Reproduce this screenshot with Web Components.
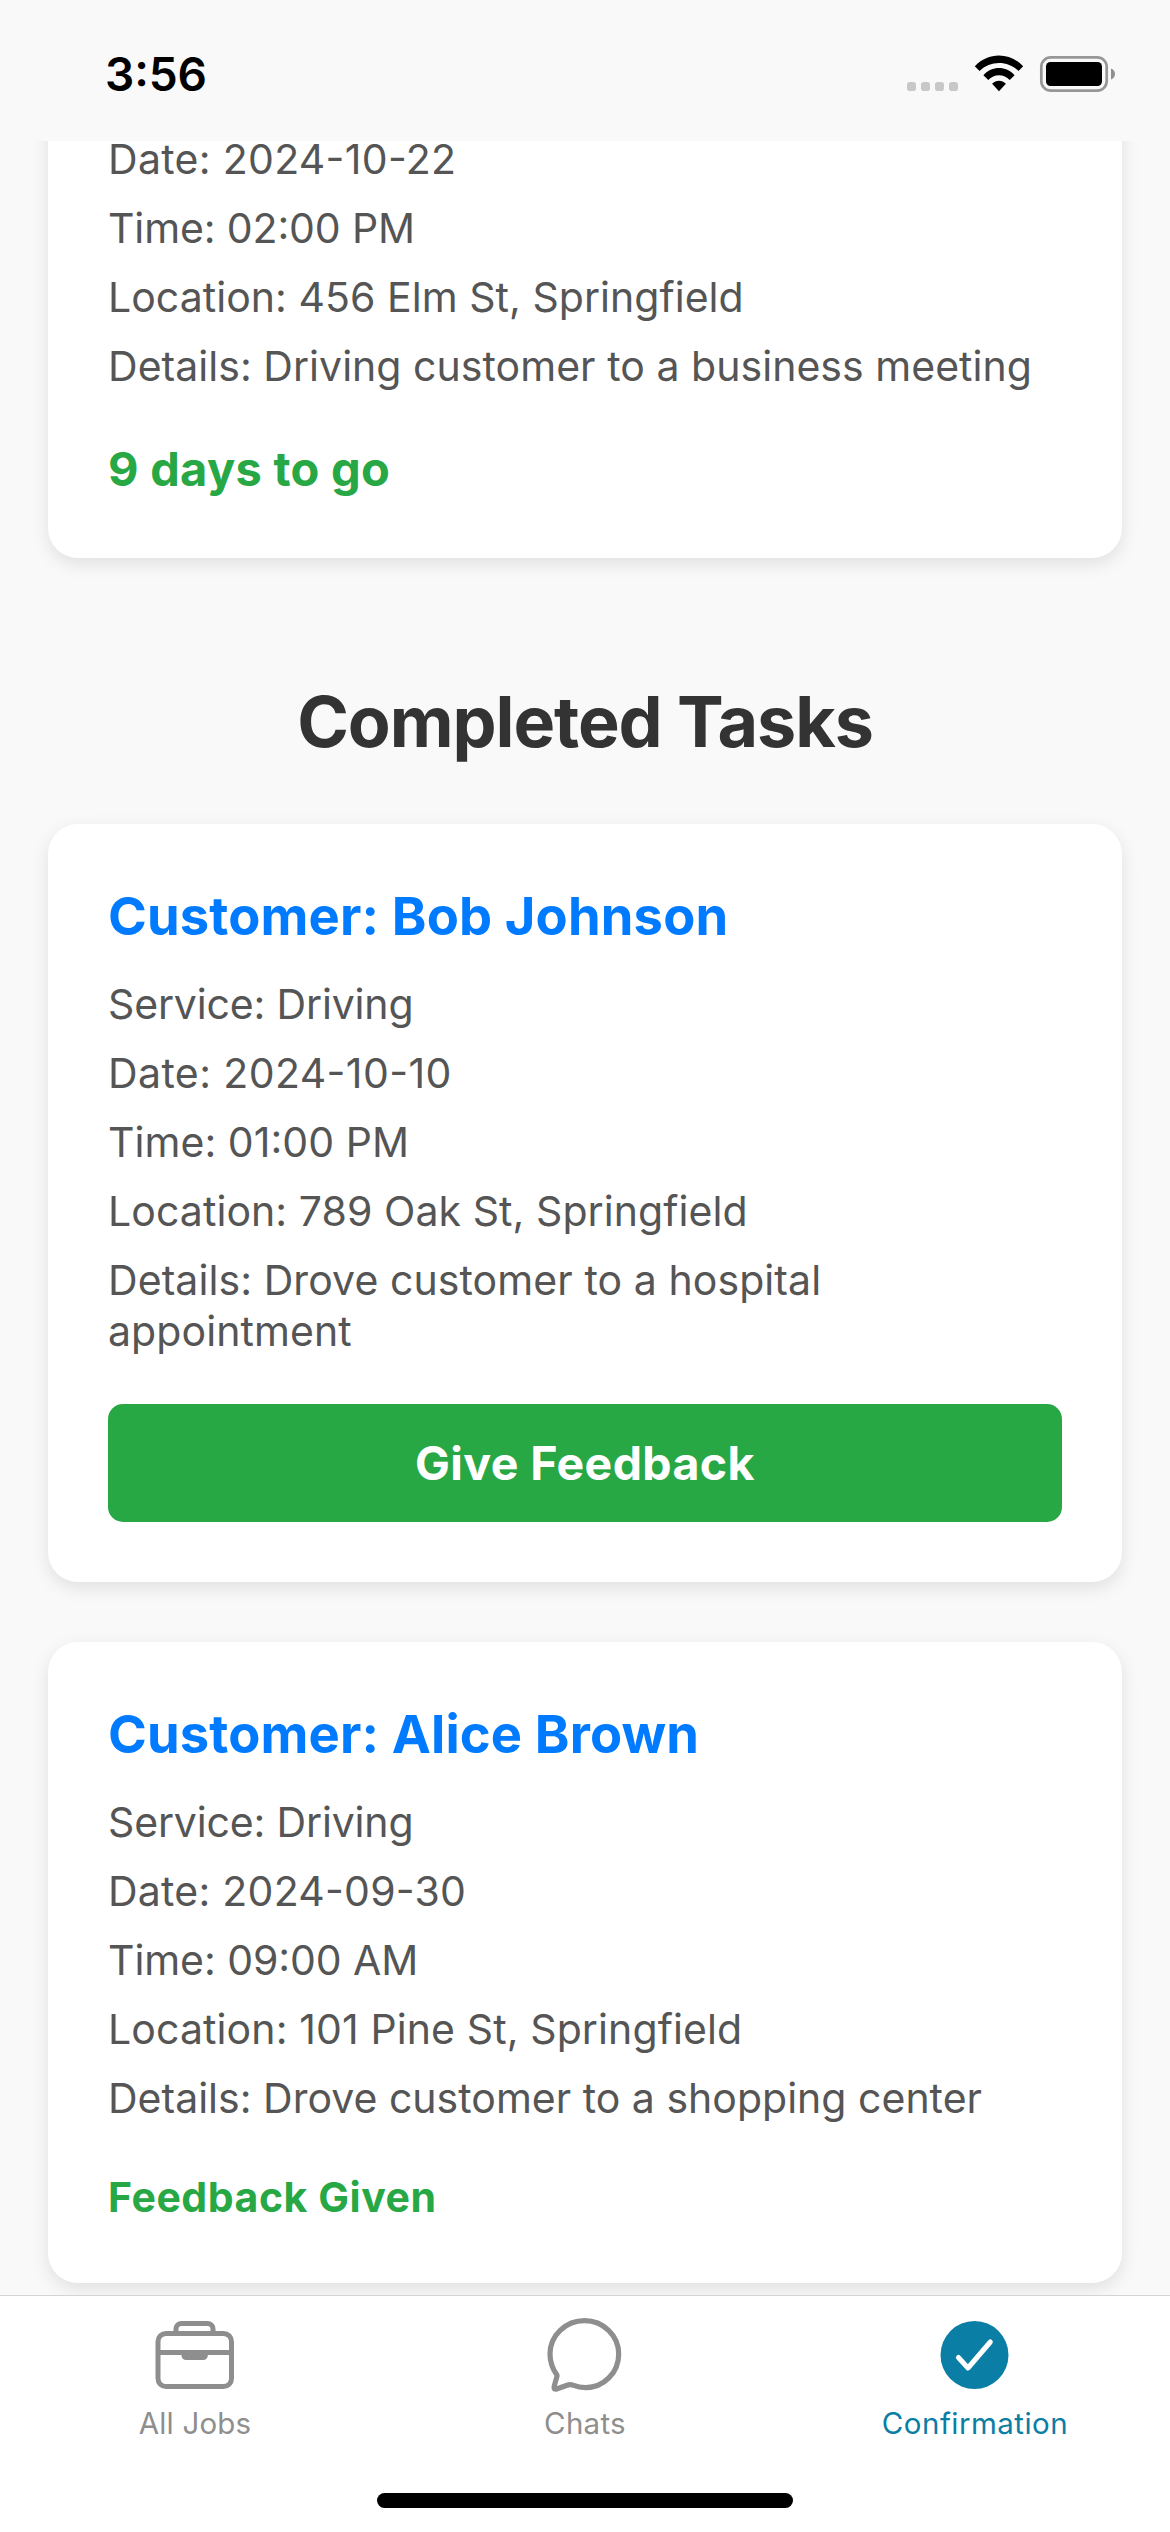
<!DOCTYPE html>
<html lang="en">
<head>
<meta charset="utf-8">
<title>Confirmation</title>
<style>
html,body{margin:0;padding:0}
body{width:1170px;height:2532px;overflow:hidden;background:#f9f9f9;font-family:Inter,"Liberation Sans",sans-serif;font-feature-settings:"calt" 1}
</style>
</head>
<body>
<phone-screen>
  <status-bar slot="status" time="3:56"></status-bar>
  <task-card style="margin-top:-67px">
    <task-row style="--track:.3px">Date: 2024-10-22</task-row>
    <task-row style="--track:-.13px">Time: 02:00 PM</task-row>
    <task-row style="--track:.04px">Location: 456 Elm St, Springfield</task-row>
    <task-row style="--track:.04px">Details: Driving customer to a business meeting</task-row>
    <task-note slot="footer" large>9 days to go</task-note>
  </task-card>
  <section-title>Completed Tasks</section-title>
  <task-card customer="Bob Johnson">
    <task-row style="--track:-.154px">Service: Driving</task-row>
    <task-row style="--track:.4px">Date: 2024-10-10</task-row>
    <task-row style="--track:.049px">Time: 01:00 PM</task-row>
    <task-row style="--track:.07px">Location: 789 Oak St, Springfield</task-row>
    <task-row style="--track:.08px">Details: Drove customer to a hospital appointment</task-row>
    <action-button slot="footer">Give Feedback</action-button>
  </task-card>
  <task-card customer="Alice Brown" style="margin-top:60px">
    <task-row style="--track:-.154px">Service: Driving</task-row>
    <task-row style="--track:.236px">Date: 2024-09-30</task-row>
    <task-row style="--track:-.07px">Time: 09:00 AM</task-row>
    <task-row style="--track:.11px">Location: 101 Pine St, Springfield</task-row>
    <task-row style="--track:.01px">Details: Drove customer to a shopping center</task-row>
    <task-note slot="footer">Feedback Given</task-note>
  </task-card>
  <tab-bar slot="tabs">
    <tab-item icon="briefcase" style="--track:.167px">All Jobs</tab-item>
    <tab-item icon="chat" style="--track:.27px">Chats</tab-item>
    <tab-item icon="check" active style="--track:.483px">Confirmation</tab-item>
  </tab-bar>
</phone-screen>
<script>
const define = (name, render) => customElements.define(name, class extends HTMLElement {
  constructor() { super(); this.attachShadow({ mode: 'open' }); }
  connectedCallback() { this.shadowRoot.innerHTML = render(this); }
});

define('phone-screen', () => `
<style>
:host{display:flex;flex-direction:column;width:1170px;height:2532px;background:#f9f9f9}
main{flex:1;min-height:0;overflow:hidden;display:flex;flex-direction:column;padding:0 48px}
</style>
<slot name="status"></slot><main><slot></slot></main><slot name="tabs"></slot>`);

define('status-bar', el => `
<style>
:host{display:flex;justify-content:space-between;box-sizing:border-box;height:141px;flex:none;padding:46px 54px 0 105px;color:#000}
time{font-size:46px;font-weight:600;line-height:56px;letter-spacing:-.088px}
svg{display:block;width:210px;height:40px;margin-top:8px}
</style>
<time>${el.getAttribute('time')}</time>
<svg viewBox="906 54 210 40">
<g fill="#c8c8c8"><rect x="907" y="82" width="9" height="9" rx="2.8"/><rect x="921" y="82" width="9" height="9" rx="2.8"/><rect x="935" y="82" width="9" height="9" rx="2.8"/><rect x="949" y="82" width="9" height="9" rx="2.8"/></g>
<path d="M974.8 66.2C988 52 1010 52 1023.2 66.2L1018.5 71C1008 60.3 990 60.3 979.5 71Z"/>
<path d="M983.4 75.2C992 65.6 1006 65.6 1014.6 75.2L1009.7 80C1004 73.6 994 73.6 988.3 80Z"/>
<path d="M992.1 83.7C996 79.6 1002 79.6 1005.9 83.7L999 91.2Z"/>
<rect x="1041.3" y="57.3" width="65.4" height="33.4" rx="9.5" fill="none" stroke="#979797" stroke-width="2.7"/>
<rect x="1046" y="62" width="56" height="24" rx="4.5"/>
<path d="M1111 68.5C1116.3 70.5 1116.3 77.5 1111 79.5Z" fill="#8f8f8f"/>
</svg>`);

define('section-title', () => `
<style>
:host{display:block;margin:121px 0 59px;text-align:center;font-size:70px;line-height:86px;font-weight:700;letter-spacing:-1.085px;color:#333}
</style><slot></slot>`);

define('task-card', el => {
  const customer = el.getAttribute('customer');
  return `
<style>
:host{display:flex;flex:none;flex-direction:column;box-sizing:border-box;padding:60px;background:#fff;border-radius:30px;box-shadow:0 6px 18px rgba(0,0,0,.1)}
h2{margin:0 0 30px;font-size:52.5px;line-height:65px;font-weight:700;letter-spacing:.14px;color:#007bff}
.rows{display:flex;flex-direction:column;gap:18px;margin-bottom:48px}
h2 + .rows{margin-bottom:47px}
</style>
${customer ? `<h2>Customer: ${customer}</h2>` : ''}
<div class="rows"><slot></slot></div><slot name="footer"></slot>`;
});

define('task-row', () => `
<style>:host{display:block;font-size:41px;line-height:51px;letter-spacing:var(--track,0);color:#555}</style><slot></slot>`);

define('task-note', () => `
<style>
:host{display:block;font-size:41px;line-height:51px;font-weight:700;letter-spacing:.547px;color:#28a745;padding-top:1px}
:host([large]){font-size:47px;line-height:58px;letter-spacing:.28px;padding-top:0}
</style><slot></slot>`);

define('action-button', () => `
<style>
:host{display:block}
button{display:block;width:100%;height:118px;margin:0;padding:0;border:0;border-radius:15px;background:#28a745;color:#fff;font:700 46.5px/58px Inter,"Liberation Sans",sans-serif;letter-spacing:.372px}
</style><button><slot></slot></button>`);

define('tab-bar', () => `
<style>
:host{display:flex;flex:none;flex-direction:column;align-items:center;box-sizing:border-box;height:237px;background:#fff;border-top:1px solid #d4d4d4}
nav{display:grid;grid-template-columns:repeat(3,1fr);width:1170px;height:197px}
.home{width:416px;height:15px;border-radius:8px;background:#000}
</style><nav><slot></slot></nav><div class="home"></div>`);

const icons = {
  briefcase: `<g fill="none" stroke="currentColor" stroke-width="5"><rect x="11" y="20.5" width="73.5" height="53" rx="8"/><path d="M11 39.5H84.500M29 20.5V16a5.500 5.500 0 0 1 5.500-5.500H60.500a5.500 5.500 0 0 1 5.500 5.500V20.500"/></g><path d="M34.500 40H60.800V42.500a4.500 4.500 0 0 1-4.500 4.500H39a4.500 4.500 0 0 1-4.500-4.500Z" fill="currentColor"/>`,
  chat: `<path d="M16.8 61.5C12.5 55.5 9.9 48 9.9 40.5C9.9 22 25.5 7.200 44.5 7.200C63 7.200 78.600 22 78.600 40.500C78.600 59 64 74.200 45.500 74.200C40 74.200 36.500 73.200 33.500 72Q30 70.700 27 71.800L16.500 75.600Q13.500 76.300 14 73.200L16.700 63.500Q17.200 62.300 16.800 61.500Z" transform="translate(3.1 .4)" fill="none" stroke="currentColor" stroke-width="5.2" stroke-linejoin="round"/>`,
  check: `<circle cx="47.5" cy="42" r="34" fill="currentColor"/><path d="M31.400 44.500L41 55L63.300 29" fill="none" stroke="#fff" stroke-width="5" stroke-linecap="round" stroke-linejoin="round"/>`
};
define('tab-item', el => `
<style>
:host{display:flex;flex-direction:column;align-items:center;color:#8e8e8e;font-size:29.5px;line-height:36px;letter-spacing:var(--track,0)}
:host([active]){color:#0a7ea4}
svg{display:block;width:97px;height:84px;margin:17px 0 8px}
</style>
<svg viewBox="0 0 97 84">${icons[el.getAttribute('icon')]}</svg><span><slot></slot></span>`);
</script>
</body>
</html>
